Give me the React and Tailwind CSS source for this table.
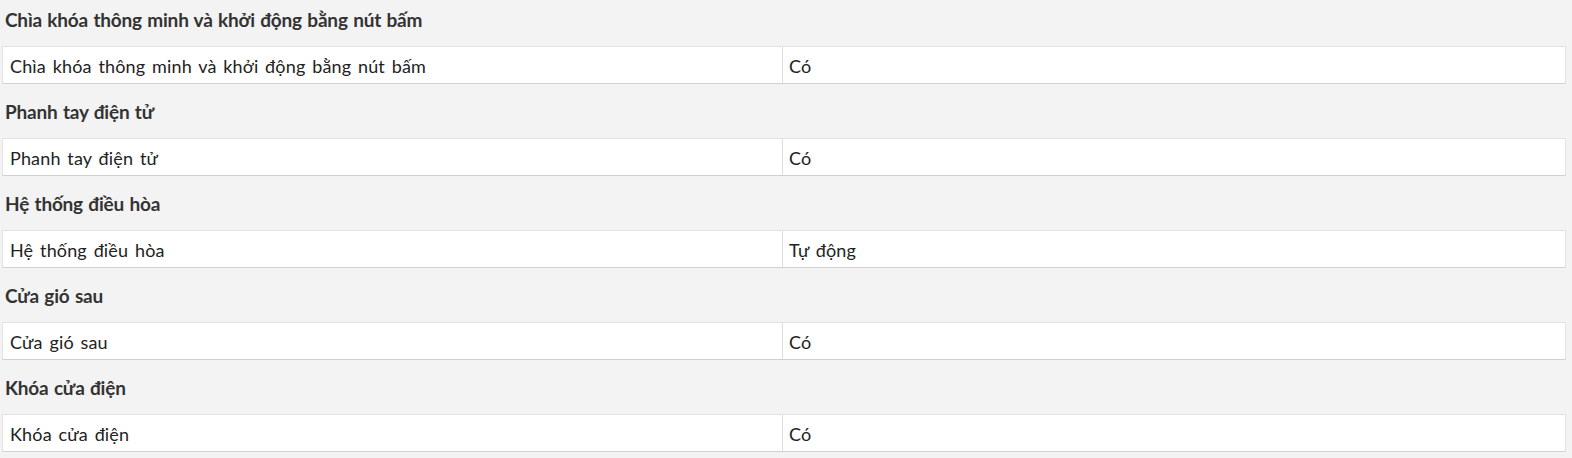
import React from "react";

const specs = [
  { title: "Chìa khóa thông minh và khởi động bằng nút bấm", value: "Có" },
  { title: "Phanh tay điện tử", value: "Có" },
  { title: "Hệ thống điều hòa", value: "Tự động" },
  { title: "Cửa gió sau", value: "Có" },
  { title: "Khóa cửa điện", value: "Có" },
];

const App = () => {
  return (
    <div
      className="min-h-screen bg-[#f3f3f3] text-[#222]"
      style={{ fontFamily: "Lato, 'Open Sans', sans-serif" }}
    >
      {specs.map((spec, index) => (
        <div key={index} className="pb-2">
          <h3 className="pt-2 mb-[14px] pl-[5px] h-8 leading-6 text-[19px] tracking-[-0.2px] [word-spacing:1px] font-bold text-[#333]">
            {spec.title}
          </h3>
          <div className="ml-[2px] w-[1564px] h-[38px] flex bg-white border border-[#e2e2e2] border-b-[#d0d0d0]">
            <div className="w-[780px] pl-[7px] pt-[2px] flex items-center text-[18px] tracking-[0.15px] [word-spacing:2px] border-r border-[#dddddd]">
              {spec.title}
            </div>
            <div className="flex-1 pl-[6px] pt-[2px] flex items-center text-[18px] tracking-[0.15px] [word-spacing:2px]">
              {spec.value}
            </div>
          </div>
        </div>
      ))}
    </div>
  );
};

export default App;
